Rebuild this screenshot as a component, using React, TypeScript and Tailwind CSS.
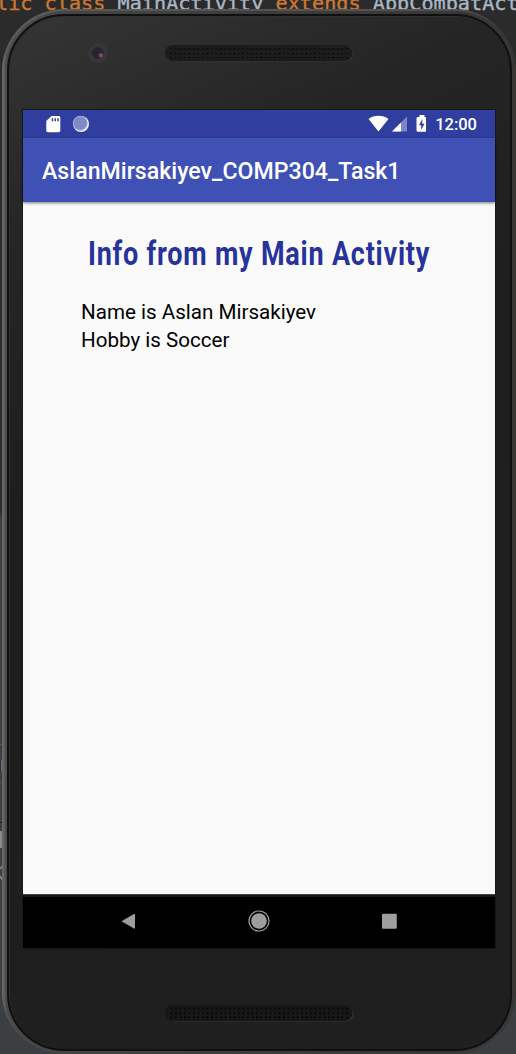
import React from "react";

function Speaker({ id, hole, shade, body }: { id: string; hole: string; shade: string; body: string }) {
  return (
    <svg width="190" height="18" viewBox="0 0 190 18" className="block">
      <defs>
        <pattern id={id} x="4.5" y="2.5" width="4.5" height="4.5" patternUnits="userSpaceOnUse">
          <rect x="1" y="1" width="2" height="2" fill={hole} />
          <rect x="1.8" y="0.6" width="1" height="0.8" fill={shade} />
        </pattern>
      </defs>
      <rect x="1" y="1.6" width="187.500" height="16" rx="8" fill="#353535" />
      <rect x="0" y="1" width="187.500" height="16" rx="8" fill={body} />
      <rect x="4" y="2.5" width="181" height="13.5" rx="6" fill={`url(#${id})`} />
    </svg>
  );
}

function StatusBar() {
  return (
    <div className="flex h-[28px] items-center justify-between bg-[#303f9f] pl-[23px] pr-[18px]">
      <div className="flex items-center gap-3">
        <svg width="16" height="20" viewBox="0 0 16 20">
          <path d="M5.500 2h7.200c1 0 1.600.7 1.600 1.600v13c0 1-.6 1.600-1.600 1.600H1.900c-1 0-1.600-.6-1.600-1.600V7z" fill="#fff" />
          <path d="M5.700 4.200h1.500v3H5.700zM8.500 4.200H10v3H8.500zM11.300 4.200h1.500v3h-1.500z" fill="#303f9f" />
        </svg>
        <svg width="18" height="18" viewBox="0 0 18 18" className="-ml-[2px]">
          <circle cx="9" cy="9" r="8" fill="#f0f2fa" />
          <circle cx="8.200" cy="8.200" r="7.200" fill="#7f89c5" />
          <circle cx="8.200" cy="8.200" r="6.900" fill="none" stroke="#a6aedb" strokeWidth=".8" />
        </svg>
      </div>
      <div className="flex items-center">
        <svg width="58" height="20" viewBox="0 0 58 20">
          <path d="M.5 5C6.300 .8 14.700 .8 20.500 5L10.500 17.500z" fill="#fff" />
          <path d="M39 2.500v15H24z" fill="#7d87c5" />
          <path d="M33 8.500v9h-9z" fill="#fff" />
          <path d="M51.500 1h5v2h1.200q1.300 0 1.300 1.300v12q0 1.500-1.500 1.500h-7.500q-1.500 0-1.500-1.500v-12Q48.500 3 49.800 3h1.700z" fill="#fff" />
          <path d="M54.300 5l-3.300 6.200h2.200V16l3.300-6.300h-2.200z" fill="#303f9f" />
        </svg>
        <span className="ml-[9px] pt-[2px] text-[16.500px] font-medium leading-none text-white">12:00</span>
      </div>
    </div>
  );
}

function NavigationBar() {
  return (
    <div className="flex h-[54px] items-center justify-between border-t border-[#444] bg-black px-[94px] pb-px shadow-[inset_0_2px_0_#181818]">
      <svg width="24" height="24" viewBox="0 0 24 24">
        <path d="M18 5.500v13.500q0 1-1 .5L5.300 12.800q-.8-.5 0-1L17 5q1-.5 1 .5z" fill="#9e9e9e" />
      </svg>
      <svg width="24" height="24" viewBox="0 0 24 24">
        <circle cx="12" cy="12" r="10" fill="none" stroke="#9e9e9e" strokeWidth="1.200" />
        <circle cx="12" cy="12" r="7.800" fill="#9e9e9e" />
      </svg>
      <svg width="24" height="24" viewBox="0 0 24 24">
        <rect x="5" y="4.700" width="14.800" height="15" rx="1" fill="#9e9e9e" />
      </svg>
    </div>
  );
}

export default function App() {
  return (
    <div className="relative h-[1054px] w-[516px] overflow-hidden bg-[linear-gradient(#2b2b2b_0_510px,#3c3f41_520px)] font-['Roboto',sans-serif]">
      <div className="absolute left-[-4px] top-[-8px] whitespace-pre font-['DejaVu_Sans_Mono',monospace] text-[20.200px] leading-[22px] text-[#a9b7c6] [-webkit-text-stroke:0.4px_currentColor]">
        <span className="text-[#cc7832]">lic class </span>MainActivity<span className="text-[#cc7832]"> extends </span>AppCombatAct
      </div>
      <div className="absolute left-0 top-[744px] h-px w-[3px] bg-[#555]" />
      <div className="absolute left-0 top-[760px] h-[11px] w-[3px] bg-[linear-gradient(90deg,#3a2d2b_1px,#596a8e_1px)]" />
      <div className="absolute left-0 top-[782px] h-px w-[3px] bg-[#555]" />
      <div className="absolute left-0 top-[822px] h-px w-[3px] bg-[#222]" />
      <div className="absolute left-0 top-[831px] h-[17px] w-[2px] bg-[#8a8984]" />
      <svg className="absolute left-0 top-[865px]" width="3" height="16" viewBox="0 0 3 16">
        <path d="M3 0L0 4M0 11l3 5" fill="none" stroke="#888" strokeWidth="1.500" />
      </svg>
      <div className="relative h-full pl-[2px] pt-[9px]">
        <div className="h-[1045px] w-[514px] rounded-[62px] bg-[linear-gradient(90deg,#686868,#484848_5px,#3c3c3c_50%,#383635)] pl-[5px] pr-[4px] pt-[5px] pb-[3px] shadow-[inset_2px_2px_1px_#6a6a6a88]">
          <div className="h-full rounded-[57px] border-2 border-[#101010] bg-[linear-gradient(155deg,#353536_0%,#252525_18%,#1e1e1e_40%,#1f1f1f_100%)] shadow-[inset_1px_1px_0_#303030]">
            <div className="flex h-[94px] items-start pl-[79px] pt-[27px]">
              <div className="flex size-[20px] items-center justify-center rounded-full bg-[#373738]">
                <div className="size-[12px] rounded-full bg-[radial-gradient(circle_at_75%_70%,#805365_0_1px,#292532_3px,#25232c)]" />
              </div>
              <div className="ml-[57px] mt-[1px]"><Speaker id="earpiece" hole="#080808" shade="#444" body="#1c1c1c" /></div>
            </div>
            <main className="ml-[14px] h-[838px] w-[472px] bg-[#fafafa] shadow-[0_0_0_1px_#181818]">
              <StatusBar />
              <header className="relative flex h-[64px] items-center bg-[#3f51b5] pl-[19px] pt-[5px] shadow-[0_1px_3px_#0008]">
                <h1 className="whitespace-nowrap text-[23.150px] font-medium text-white">AslanMirsakiyev_COMP304_Task1</h1>
              </header>
              <section className="h-[692px] pt-[32px]">
                <h2 className="ml-[65px] w-max origin-left scale-x-[0.830] whitespace-nowrap text-[32.500px] font-bold leading-[40px] tracking-[0.950px] text-[#27329b]">Info from my Main Activity</h2>
                <div className="ml-[58px] mt-[25px] text-[20.600px] leading-[27.500px] text-black">
                  <p>Name is Aslan Mirsakiyev</p>
                  <p>Hobby is Soccer</p>
                </div>
              </section>
              <NavigationBar />
            </main>
            <div className="ml-[156px] mt-[56px]"><Speaker id="loudspeaker" hole="#050505" shade="#111" body="#171717" /></div>
          </div>
        </div>
      </div>
    </div>
  );
}
